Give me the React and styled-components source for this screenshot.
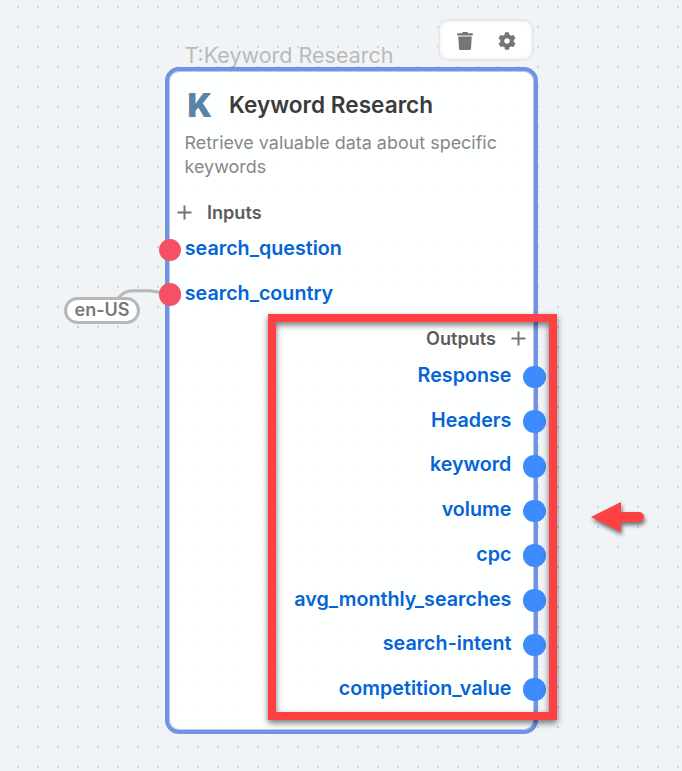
import React from "react";
import styled, { createGlobalStyle } from "styled-components";
import { FaTrash, FaCog } from "react-icons/fa";

const GlobalStyle = createGlobalStyle`
  body { margin: 0; font-family: Inter, sans-serif; }
  * { box-sizing: border-box; }
`;

const Canvas = styled.main`
  position: relative;
  width: 682px;
  height: 771px;
  overflow: hidden;
  background-color: #f0f4f7;
  background-image: conic-gradient(from 90deg at 18px 18px, #cbd5e0 90deg, transparent 0);
  background-size: 20px 20px;
  background-position: -1px -12px;
`;

const NodeTag = styled.div`
  position: absolute;
  left: 184.5px;
  top: 42px;
  font-size: 21.5px;
  line-height: 26px;
  color: #bababa;
  white-space: nowrap;
`;

const Toolbar = styled.div`
  position: absolute;
  left: 438px;
  top: 19px;
  width: 96px;
  height: 42px;
  display: flex;
  align-items: center;
  justify-content: center;
  gap: 24px;
  padding-top: 2px;
  border: 2px solid #e8e8e9;
  border-radius: 10px;
  background: #fff;
  box-shadow: inset 0 0 4px rgba(0, 0, 0, 0.08);
  color: #757575;
`;

const Tool = styled.button`
  display: flex;
  padding: 0;
  border: 0;
  background: none;
  color: inherit;
  font-size: 18px;
`;

const Node = styled.section`
  position: absolute;
  left: 165px;
  top: 67px;
  width: 373px;
  height: 667px;
  border: 4px solid #7093e2;
  border-radius: 14px;
  background: rgba(255, 255, 255, 0.92);
  box-shadow: inset 0 0 0 1px rgba(112, 147, 226, 0.5);
  display: flex;
  flex-direction: column;
`;

const Header = styled.header`
  display: flex;
  align-items: center;
  height: 36px;
  margin: 16px 0 0 18px;
`;

const Logo = styled.span`
  width: 42px;
  padding: 2px 0 0 0.5px;
  font: 900 32.4px/36px Inter, sans-serif;
  color: #5a84a6;
`;

const Title = styled.h1`
  margin: -1px 0 0;
  font-size: 22.6px;
  font-weight: 600;
  color: #3b3b3b;
`;

const Description = styled.p`
  margin: 8px 20px 0 15.5px;
  height: 60px;
  font-size: 17.95px;
  line-height: 24px;
  color: #888;
`;

const SectionBar = styled.div`
  display: flex;
  align-items: center;
  flex-direction: ${(p) => (p.$end ? "row-reverse" : "row")};
  height: 39px;
  margin: 0 1px;
  padding: ${(p) => (p.$end ? "0 7px 0 0" : "3px 0 0 7px")};
  gap: 15px;
  background: #fff;
  font-size: 18.1px;
  font-weight: 600;
  color: #5c5c5c;
`;

const BarLabel = styled.span`
  margin-top: -1px;
`;

const PlusIcon = styled.svg`
  width: 15px;
  height: 15px;
  stroke: #757575;
  stroke-width: 2;
`;

const Ports = styled.div`
  display: grid;
  grid-auto-rows: 44.7px;
  margin-top: ${(p) => p.$shift}px;
  height: ${(p) => p.$height}px;
`;

const Port = styled.div`
  display: flex;
  align-items: center;
  flex-direction: ${(p) => (p.$end ? "row-reverse" : "row")};
  gap: ${(p) => (p.$end ? 12 : 3.5)}px;
  margin: ${(p) => (p.$end ? "0 -12px 0 0" : "0 0 0 -10.3px")};
  color: #0564d6;
  font-size: 19.7px;
  font-weight: 600;
  line-height: 24px;
`;

const Dot = styled.i`
  flex: none;
  width: 22.6px;
  height: 22.6px;
  border-radius: 50%;
  background: ${(p) => p.$color};
`;

const PortName = styled.span`
  margin-top: -3.7px;
`;

const Wire = styled.svg`
  position: absolute;
  left: 110px;
  top: 280px;
`;

const Value = styled.div`
  position: absolute;
  left: 64px;
  top: 297px;
  width: 76px;
  height: 27px;
  display: flex;
  align-items: center;
  justify-content: center;
  padding-bottom: 2px;
  border: 3px solid #b8b8b8;
  border-radius: 14px;
  background: #fff;
  color: #777;
  font-size: 18px;
  font-weight: 600;
`;

const Highlight = styled.div`
  position: absolute;
  left: 268px;
  top: 314px;
  width: 289px;
  height: 406px;
  border: 8px solid #fe4243;
  filter: drop-shadow(0 3px 3px rgba(0, 0, 0, 0.55));
`;

const Pointer = styled.svg`
  position: absolute;
  left: 580px;
  top: 490px;
  overflow: visible;
  filter: drop-shadow(1px 3px 2px rgba(0, 0, 0, 0.55));
`;

const inputs = ["search_question", "search_country"];
const outputs = [
  "Response",
  "Headers",
  "keyword",
  "volume",
  "cpc",
  "avg_monthly_searches",
  "search-intent",
  "competition_value",
];

const Plus = () => (
  <PlusIcon viewBox="0 0 15 15">
    <path d="M7.5 .5v14M.5 7.5h14" />
  </PlusIcon>
);

export default function App() {
  return (
    <Canvas>
      <GlobalStyle />
      <NodeTag>T:Keyword Research</NodeTag>
      <Toolbar>
        <Tool aria-label="Delete"><FaTrash /></Tool>
        <Tool aria-label="Settings"><FaCog /></Tool>
      </Toolbar>
      <Wire width="60" height="30" fill="none" stroke="#b8b8b8" strokeWidth="3">
        <path d="M8 18C14 12 17 10.8 24 10.8H38C45 10.8 48 11.5 56 14.5" />
      </Wire>
      <Value>en-US</Value>
      <Node>
        <Header>
          <Logo>K</Logo>
          <Title>Keyword Research</Title>
        </Header>
        <Description>Retrieve valuable data about specific keywords</Description>
        <SectionBar><Plus /><BarLabel>Inputs</BarLabel></SectionBar>
        <Ports $shift={-2.3} $height={91.3}>
          {inputs.map((name) => (
            <Port key={name}>
              <Dot $color="#f55065" />
              <PortName>{name}</PortName>
            </Port>
          ))}
        </Ports>
        <SectionBar $end><Plus /><BarLabel>Outputs</BarLabel></SectionBar>
        <Ports $shift={-3.4} $height={358}>
          {outputs.map((name) => (
            <Port key={name} $end>
              <Dot $color="#3e8bfd" />
              <PortName>{name}</PortName>
            </Port>
          ))}
        </Ports>
      </Node>
      <Highlight />
      <Pointer width="70" height="50" fill="#fe4243">
        <path d="M11 27L41 12v10h18a5 5 0 0 1 0 10H41v10z" />
      </Pointer>
    </Canvas>
  );
}
